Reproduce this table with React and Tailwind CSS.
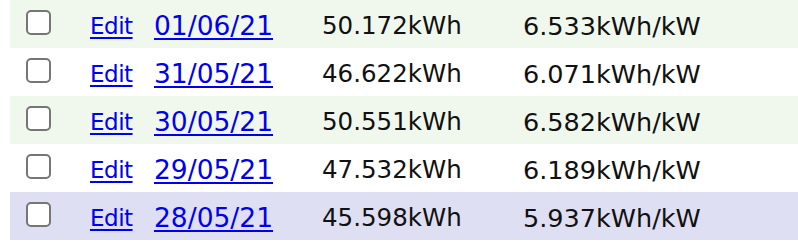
const rows = [
  { date: "01/06/21", energy: "50.172kWh", yield: "6.533kWh/kW", bg: "bg-[#f0f8ee]" },
  { date: "31/05/21", energy: "46.622kWh", yield: "6.071kWh/kW", bg: "bg-white" },
  { date: "30/05/21", energy: "50.551kWh", yield: "6.582kWh/kW", bg: "bg-[#f0f8ee]" },
  { date: "29/05/21", energy: "47.532kWh", yield: "6.189kWh/kW", bg: "bg-white" },
  { date: "28/05/21", energy: "45.598kWh", yield: "5.937kWh/kW", bg: "bg-[#dfdff3]" },
];

export default function App() {
  return (
    <div className="w-[798px] h-[244px] bg-white pl-[10px] font-['DejaVu_Sans',Verdana,sans-serif] text-[#111]">
      {rows.map((row, i) => (
        <div key={i} className={`flex items-center h-[48px] ${row.bg}`}>
          <div className="w-[80px] pl-[16px] flex items-center">
            <span className="block w-[25px] h-[25px] rounded-[5px] border-2 border-[#767676] bg-white -mt-[3px]" />
          </div>
          <a href="#" className="w-[64px] pt-[4px] text-[23px] tracking-[-0.5px] text-[#0000ee] underline decoration-2 underline-offset-[3px]">
            Edit
          </a>
          <a href="#" className="w-[168px] pt-[4px] text-[26.5px] text-[#0000ee] underline decoration-2 underline-offset-[3px]">
            {row.date}
          </a>
          <div className="w-[201px] pt-[4px] text-[24.5px]">{row.energy}</div>
          <div className="pt-[4px] text-[25.5px]">{row.yield}</div>
        </div>
      ))}
    </div>
  );
}
